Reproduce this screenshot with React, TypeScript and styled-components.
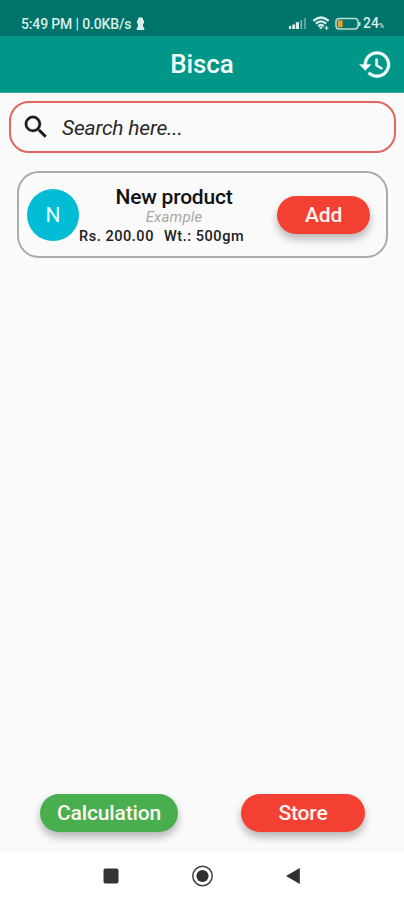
import React from 'react';
import styled, { createGlobalStyle } from 'styled-components';

const GlobalStyle = createGlobalStyle`
  * { box-sizing: border-box; }
  body { margin: 0; background: #fafafa; font-family: Roboto, sans-serif; }
`;

const Screen = styled.div`
  width: 404px;
  height: 900px;
  display: flex;
  flex-direction: column;
  overflow: hidden;
  background: #fafafa;
`;

const StatusBar = styled.div`
  height: 36px;
  flex: none;
  display: flex;
  align-items: center;
  padding: 11px 20px 0 21px;
  background: #00736a;
  color: #d8efec;
  font-size: 14px;
  font-weight: 500;
  line-height: 16px;
  white-space: nowrap;
`;

const StatusText = styled.span<{ $spacing?: number }>`
  letter-spacing: ${(p) => p.$spacing ?? 0}px;
`;

const StatusIcons = styled.div`
  display: flex;
  align-items: center;
  margin-left: auto;
  gap: 5px;
`;

const Percent = styled.span`
  font-size: 7px;
`;

const Level = styled.div`
  display: flex;
  align-items: baseline;
  margin: 2px 0 0 -4px;
`;

const AppBar = styled.header`
  height: 57px;
  flex: none;
  display: grid;
  grid-template-columns: 48px 1fr 48px;
  align-items: center;
  padding: 0 4px;
  background: #009788;
  border-bottom: 1px solid #34aa9e;
  color: #f4fffd;
`;

const Title = styled.h1`
  margin: 0;
  text-align: center;
  font-size: 26px;
  line-height: 30px;
  font-weight: 500;
  letter-spacing: -0.1px;
`;

const IconButton = styled.button`
  display: flex;
  justify-content: center;
  padding: 0 1px 0 0;
  border: 0;
  background: none;
  color: inherit;
`;

const Content = styled.main`
  flex: 1;
  display: flex;
  flex-direction: column;
  padding: 8px 8px 0 9px;
`;

const SearchBox = styled.label`
  height: 52px;
  display: flex;
  align-items: center;
  gap: 11px;
  padding-left: 10px;
  border: 2px solid #e3655f;
  border-radius: 20px;
`;

const SearchInput = styled.input`
  flex: 1;
  min-width: 0;
  padding: 2px 0 0;
  border: 0;
  outline: 0;
  background: none;
  font: italic 400 21px/24px Roboto, sans-serif;
  letter-spacing: -0.2px;
  color: #222;
  &::placeholder { color: #292929; opacity: 1; }
`;

const ProductCard = styled.article`
  height: 87px;
  display: flex;
  align-items: center;
  margin: 18px 8px 0;
  padding: 0 16px 0 8px;
  border: 2px solid #aaa;
  border-radius: 22px;
`;

const Avatar = styled.div`
  width: 52px;
  height: 52px;
  flex: none;
  display: flex;
  align-items: center;
  justify-content: center;
  border-radius: 50%;
  background: #00bdd5;
  color: #e9ffff;
  font-size: 21px;
`;

const Details = styled.div`
  width: 190px;
  display: flex;
  flex-direction: column;
  align-items: center;
  padding-top: 3px;
  white-space: nowrap;
`;

const ProductName = styled.div`
  font-size: 21px;
  line-height: 23px;
  font-weight: 500;
  letter-spacing: -0.2px;
  color: #111;
`;

const Category = styled.div`
  font-size: 15px;
  line-height: 17px;
  font-style: italic;
  letter-spacing: 0.15px;
  color: #a8a8a8;
`;

const Facts = styled.div`
  align-self: flex-start;
  display: flex;
  gap: 10px;
  font-size: 14.5px;
  line-height: 21px;
  font-weight: 500;
  letter-spacing: 0.55px;
  color: #202020;
`;

const PillButton = styled.button<{ $width: number; $color: string; $spacing?: number }>`
  width: ${(p) => p.$width}px;
  height: 38px;
  padding: 0;
  border: 0;
  border-radius: 19px;
  background: ${(p) => p.$color};
  color: #fff5f2;
  font: 500 21px/24px Roboto, sans-serif;
  letter-spacing: ${(p) => p.$spacing ?? -0.15}px;
  box-shadow: 0 5px 8px rgba(0, 0, 0, 0.28);
`;

const CardAction = styled.div`
  margin-left: auto;
`;

const Actions = styled.div`
  display: flex;
  justify-content: space-between;
  margin: auto 31px 20px;
`;

const NavBar = styled.nav`
  height: 48px;
  flex: none;
  display: flex;
  justify-content: center;
  align-items: center;
  gap: 67px;
  background: #fff;
`;

const ProfileIcon = styled.svg`
  margin-left: 5px;
`;

export default function App() {
  return (
    <>
      <GlobalStyle />
      <Screen>
        <StatusBar>
          <StatusText $spacing={-0.15}>5:49 PM | 0.0KB/s</StatusText>
          <ProfileIcon width="9" height="14" viewBox="0 0 9 14" fill="currentColor">
            <circle cx="4.5" cy="3" r="2.7" />
            <path d="M1 3.5h7v2.8L7 7v2.5L8.3 11v2H.7v-2L2 9.5V7L1 6.3z" />
          </ProfileIcon>
          <StatusIcons>
            <svg width="18" height="13" viewBox="0 0 18 13" fill="currentColor">
              <rect x="0" y="9" width="2.2" height="3" />
              <rect x="3.3" y="7.5" width="2.7" height="4.5" />
              <rect x="6.8" y="5.2" width="3.2" height="6.8" />
              <rect x="11.3" y="3" width="2" height="9" opacity=".5" />
              <rect x="15" y="1" width="2" height="11" opacity=".4" />
            </svg>
            <svg width="18" height="15" viewBox="0 0 18 15" fill="none" stroke="currentColor" strokeWidth="2.2">
              <path d="M1.3 4.8Q9-1.8 16.7 4.8M3.8 7.6Q9 3 14.2 7.6M6.2 10.2Q9 7.8 11.8 10.2" />
              <path d="M7 11h4l-2 2.5z" fill="currentColor" stroke="none" />
              <path d="M12.5 12h4M14.5 10v4" strokeWidth="1.2" />
            </svg>
            <svg width="27" height="14" viewBox="0 0 27 14" fill="none">
              <rect x="1" y="1.5" width="22" height="10.5" rx="3.2" stroke="#bdded9" strokeWidth="1.5" />
              <rect x="2.8" y="3.3" width="4.8" height="7" rx="1" fill="#e7a42b" />
              <path d="M24.5 5v4" stroke="#bdded9" strokeWidth="2" />
            </svg>
            <Level><StatusText>24</StatusText><Percent>%</Percent></Level>
          </StatusIcons>
        </StatusBar>
        <AppBar>
          <span />
          <Title>Bisca</Title>
          <IconButton aria-label="History">
            <svg width="35" height="35" viewBox="0 0 24 24" fill="currentColor">
              <path stroke="currentColor" strokeWidth=".25" d="M13 3c-4.97 0-9 4.03-9 9H1l3.89 3.89.07.14L9 12H6c0-3.87 3.13-7 7-7s7 3.13 7 7-3.13 7-7 7c-1.93 0-3.68-.79-4.94-2.06l-1.42 1.42C8.27 19.99 10.51 21 13 21c4.97 0 9-4.03 9-9s-4.03-9-9-9zm-1 5v5l4.28 2.54.72-1.21-3.5-2.08V8H12z" />
            </svg>
          </IconButton>
        </AppBar>
        <Content>
          <SearchBox>
            <svg width="30" height="30" viewBox="0 0 24 24" fill="#191919">
              <path stroke="#191919" strokeWidth=".25" d="M15.5 14h-.79l-.28-.27A6.47 6.47 0 0 0 16 9.5 6.5 6.5 0 1 0 9.5 16c1.61 0 3.09-.59 4.23-1.57l.27.28v.79l5 4.99L20.49 19l-4.99-5zm-6 0C7.01 14 5 11.99 5 9.5S7.01 5 9.5 5 14 7.01 14 9.5 11.99 14 9.5 14z" />
            </svg>
            <SearchInput placeholder="Search here..." />
          </SearchBox>
          <ProductCard>
            <Avatar>N</Avatar>
            <Details>
              <ProductName>New product</ProductName>
              <Category>Example</Category>
              <Facts><span>Rs. 200.00</span><span>Wt.: 500gm</span></Facts>
            </Details>
            <CardAction><PillButton $width={93} $color="#f44033">Add</PillButton></CardAction>
          </ProductCard>
          <Actions>
            <PillButton $width={138} $color="#49af4e">Calculation</PillButton>
            <PillButton $width={124} $color="#f44033">Store</PillButton>
          </Actions>
        </Content>
        <NavBar>
          <svg width="24" height="24" viewBox="0 0 24 24">
            <rect x="4.5" y="4.5" width="15" height="15" rx="2" fill="#343434" />
          </svg>
          <svg width="24" height="24" viewBox="0 0 24 24">
            <circle cx="12.5" cy="12" r="9.7" fill="none" stroke="#444" strokeWidth="1.5" />
            <circle cx="12.5" cy="12" r="6.1" fill="#303030" />
          </svg>
          <svg width="24" height="24" viewBox="0 0 24 24">
            <path d="M5 12 18.8 4v16z" fill="#303030" />
          </svg>
        </NavBar>
      </Screen>
    </>
  );
}
